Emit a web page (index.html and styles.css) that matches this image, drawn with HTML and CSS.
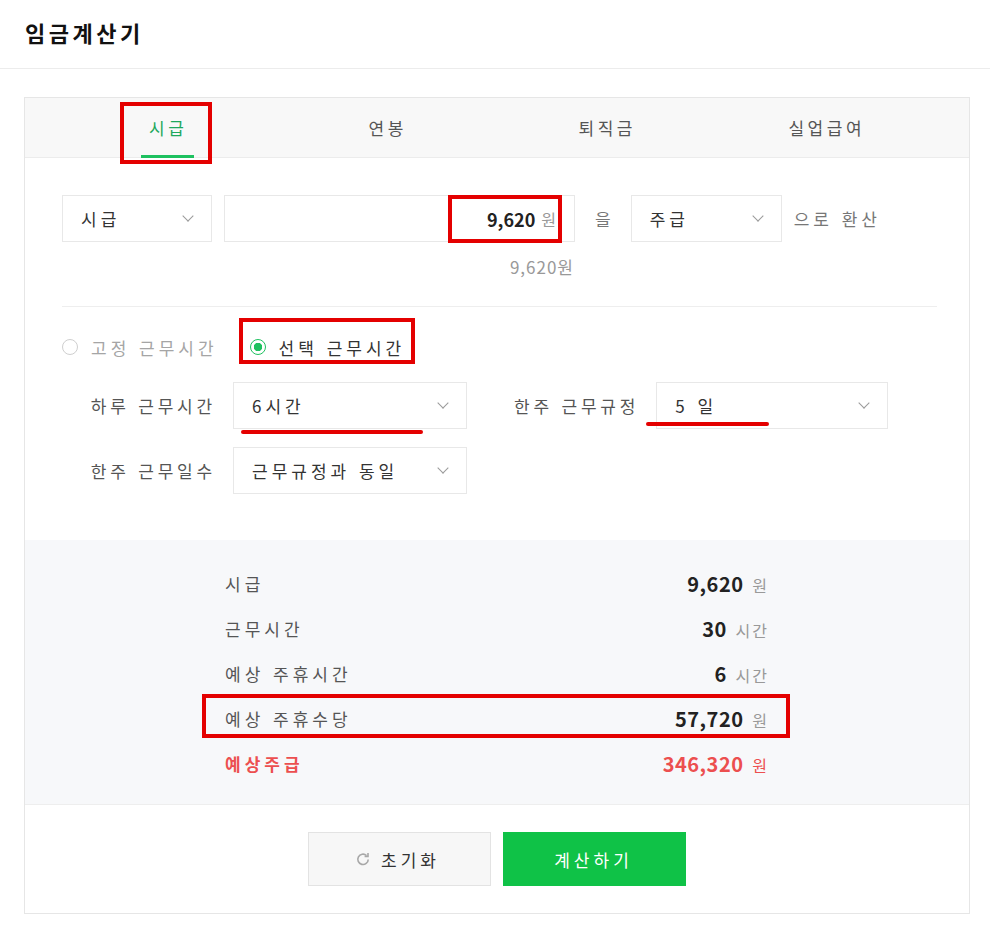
FILE: index.html
```html
<!DOCTYPE html>
<html lang="ko">
<head>
    <meta charset="utf-8">
    <title>임금계산기</title>
    <link rel="stylesheet" href="styles.css">
</head>
<body>
    <header class="page-head">
        <h1>임금계산기</h1>
    </header>

    <div class="calc">
        <nav class="tabs">
            <div class="tab active">시급<span class="mark mark-tab"></span></div>
            <div class="tab">연봉</div>
            <div class="tab">퇴직금</div>
            <div class="tab">실업급여</div>
        </nav>

        <section class="form">
            <div class="convert-row">
                <div class="select w150"><span>시급</span><i class="chev"></i></div>
                <div class="amount">
                    <b>9,620</b><span class="unit">원</span>
                    <span class="mark mark-amount"></span>
                </div>
                <span class="word">을</span>
                <div class="select w151"><span>주급</span><i class="chev"></i></div>
                <span class="word tail">으로 환산</span>
            </div>
            <div class="amount-hint">9,620원</div>

            <div class="radios">
                <label class="radio off"><i class="dot"></i>고정 근무시간</label>
                <label class="radio on"><i class="dot"></i>선택 근무시간<span class="mark mark-radio"></span></label>
            </div>

            <div class="field-row">
                <span class="field-label">하루 근무시간</span>
                <div class="select w234"><span>6시간</span><i class="chev"></i><span class="line line-hours"></span></div>
                <span class="field-label second">한주 근무규정</span>
                <div class="select w232"><span>5 일</span><i class="chev"></i><span class="line line-days"></span></div>
            </div>
            <div class="field-row">
                <span class="field-label">한주 근무일수</span>
                <div class="select w234"><span>근무규정과 동일</span><i class="chev"></i></div>
            </div>
        </section>

        <section class="result">
            <div class="result-list">
                <div class="result-row"><span>시급</span><span><b>9,620</b> <em>원</em></span></div>
                <div class="result-row"><span>근무시간</span><span><b>30</b> <em>시간</em></span></div>
                <div class="result-row"><span>예상 주휴시간</span><span><b>6</b> <em>시간</em></span></div>
                <div class="result-row"><span>예상 주휴수당</span><span><b>57,720</b> <em>원</em></span><span class="mark mark-row"></span></div>
                <div class="result-row total"><span>예상주급</span><span><b>346,320</b> <em>원</em></span></div>
            </div>
        </section>

        <div class="actions">
            <button class="btn reset">
                <svg width="16" height="16" viewBox="0 0 16 16"><path d="M13.2 8.4a5.2 5.2 0 1 1-1.7-3.9" fill="none" stroke="#a8a8a8" stroke-width="1.6"/><path d="M13 2v3.4H9.6" fill="none" stroke="#a8a8a8" stroke-width="1.6"/></svg>
                초기화
            </button>
            <button class="btn calc-btn">계산하기</button>
        </div>
    </div>
</body>
</html>
```

FILE: styles.css
```css
body {
    margin: 0;
    background: #fff;
    font-family: "Noto Sans CJK KR", "Noto Sans", sans-serif;
    color: #333;
}
.page-head {
    height: 64px;
    padding: 0 0 4px 25px;
    display: flex;
    align-items: center;
    border-bottom: 1px solid #ececec;
}
h1 {
    margin: 0;
    font-size: 22px;
    font-weight: bold;
    letter-spacing: 3.5px;
    color: #111;
}
.calc {
    margin: 28px 20px 0 24px;
    border: 1px solid #e6e6e6;
}

/* tabs */
.tabs {
    display: grid;
    grid-template-columns: repeat(4, 1fr);
    height: 59px;
    padding: 0 34px 0 32px;
    background: #f8f8f8;
    border-bottom: 1px solid #ececec;
}
.tab {
    position: relative;
    display: flex;
    align-items: center;
    justify-content: center;
    padding-left: 3px;
    font-size: 17px;
    letter-spacing: 3.5px;
    color: #555;
}
.tab.active {
    color: #1ea85c;
}
.tab.active::after {
    content: "";
    position: absolute;
    bottom: -1px;
    left: 50%;
    margin-left: -26px;
    width: 53px;
    height: 3px;
    background: #1ec15f;
}

/* red annotation marks */
.mark {
    position: absolute;
    border: 4px solid #e40000;
    pointer-events: none;
}
.mark-tab {
    top: 4px;
    left: 50%;
    margin-left: -47px;
    width: 84px;
    height: 54px;
}
.mark-amount {
    top: -1px;
    right: 12px;
    width: 106px;
    height: 40px;
}
.mark-radio {
    top: -17px;
    left: -11px;
    right: -10px;
    bottom: -5px;
}
.mark-row {
    top: -2px;
    left: -23px;
    right: -21px;
    height: 36px;
}
.line {
    position: absolute;
    height: 4px;
    border-radius: 2px;
    background: #e40000;
}
.line-hours {
    left: 7px;
    width: 182px;
    bottom: -6px;
}
.line-days {
    left: -11px;
    width: 123px;
    bottom: 2px;
}

/* form */
.form {
    padding: 37px 32px 46px 37px;
}
.convert-row {
    display: flex;
    align-items: center;
    height: 47px;
}
.select {
    position: relative;
    box-sizing: border-box;
    height: 47px;
    display: flex;
    align-items: center;
    justify-content: space-between;
    padding: 0 19px 0 18px;
    border: 1px solid #e8e8e8;
    background: #fff;
    font-size: 17px;
    letter-spacing: 4px;
    color: #333;
}
.w150 { width: 150px; }
.w151 { width: 151px; }
.w232 { width: 232px; }
.w234 { width: 234px; }
.chev {
    width: 7px;
    height: 7px;
    border-right: 1.5px solid #9a9a9a;
    border-bottom: 1.5px solid #9a9a9a;
    transform: rotate(45deg);
    margin-top: -5px;
}
.amount {
    position: relative;
    box-sizing: border-box;
    width: 351px;
    height: 47px;
    margin-left: 12px;
    display: flex;
    align-items: center;
    justify-content: flex-end;
    padding-right: 18px;
    border: 1px solid #e8e8e8;
}
.amount b {
    font-size: 18px;
    color: #222;
}
.unit {
    margin-left: 6px;
    font-size: 16px;
    color: #999;
}
.word {
    margin: 0 16px 0 20px;
    font-size: 17px;
    color: #777;
    letter-spacing: 4px;
}
.word.tail {
    margin: 0 0 0 12px;
}
.amount-hint {
    width: 512px;
    text-align: right;
    margin-top: 14px;
    font-size: 17px;
    letter-spacing: 1px;
    line-height: 22px;
    color: #999;
}
.radios {
    display: flex;
    align-items: center;
    gap: 32px;
    margin-top: 28px;
    padding-top: 28px;
    border-top: 1px solid #eeeeee;
}
.radio {
    position: relative;
    display: flex;
    align-items: center;
    height: 24px;
    font-size: 17px;
    letter-spacing: 4px;
}
.dot {
    box-sizing: border-box;
    width: 16px;
    height: 16px;
    margin-right: 13px;
    border-radius: 50%;
    border: 1px solid #cfcfcf;
    background: #fff;
}
.radio.off {
    color: #a5a5a5;
}
.radio.on {
    color: #333;
}
.radio.on .dot {
    border-color: #1ec15f;
    background: radial-gradient(circle, #1ec15f 0 4px, #fff 4.5px);
}
.field-row {
    display: flex;
    align-items: center;
    margin-top: 23px;
}
.field-row + .field-row {
    margin-top: 18px;
}
.field-label {
    width: 154px;
    margin-right: 17px;
    text-align: right;
    font-size: 17px;
    letter-spacing: 3.8px;
    color: #555;
}
.field-label.second {
    width: auto;
    margin: 0 17px 0 47px;
}

/* result */
.result {
    background: #f7f8fa;
    padding: 21px 0 18px;
    border-bottom: 1px solid #eeeeee;
}
.result-list {
    width: 544px;
    margin: 0 auto;
}
.result-row {
    position: relative;
    display: flex;
    justify-content: space-between;
    align-items: center;
    height: 45px;
    font-size: 17px;
    letter-spacing: 4px;
    color: #555;
}
.result-row > span:nth-child(2) {
    letter-spacing: 0;
}
.result-row b {
    font-size: 20px;
    letter-spacing: 0.5px;
    color: #222;
}
.result-row em {
    font-style: normal;
    font-size: 16px;
    letter-spacing: 2px;
    margin-left: 4px;
    color: #999;
}
.result-row.total span:first-child {
    color: #ec4f4f;
    font-weight: bold;
}
.result-row.total b,
.result-row.total em {
    color: #ec4f4f;
}

/* buttons */
.actions {
    display: flex;
    justify-content: center;
    gap: 12px;
    padding: 27px 0;
}
.btn {
    width: 183px;
    height: 54px;
    font-family: inherit;
    font-size: 17px;
    letter-spacing: 4px;
    cursor: pointer;
}
.reset {
    display: flex;
    align-items: center;
    justify-content: center;
    gap: 10px;
    padding-right: 10px;
    background: #f7f7f7;
    border: 1px solid #e3e3e3;
    color: #333;
}
.calc-btn {
    border: none;
    padding-left: 4px;
    background: #0fc247;
    color: #fff;
}
```
